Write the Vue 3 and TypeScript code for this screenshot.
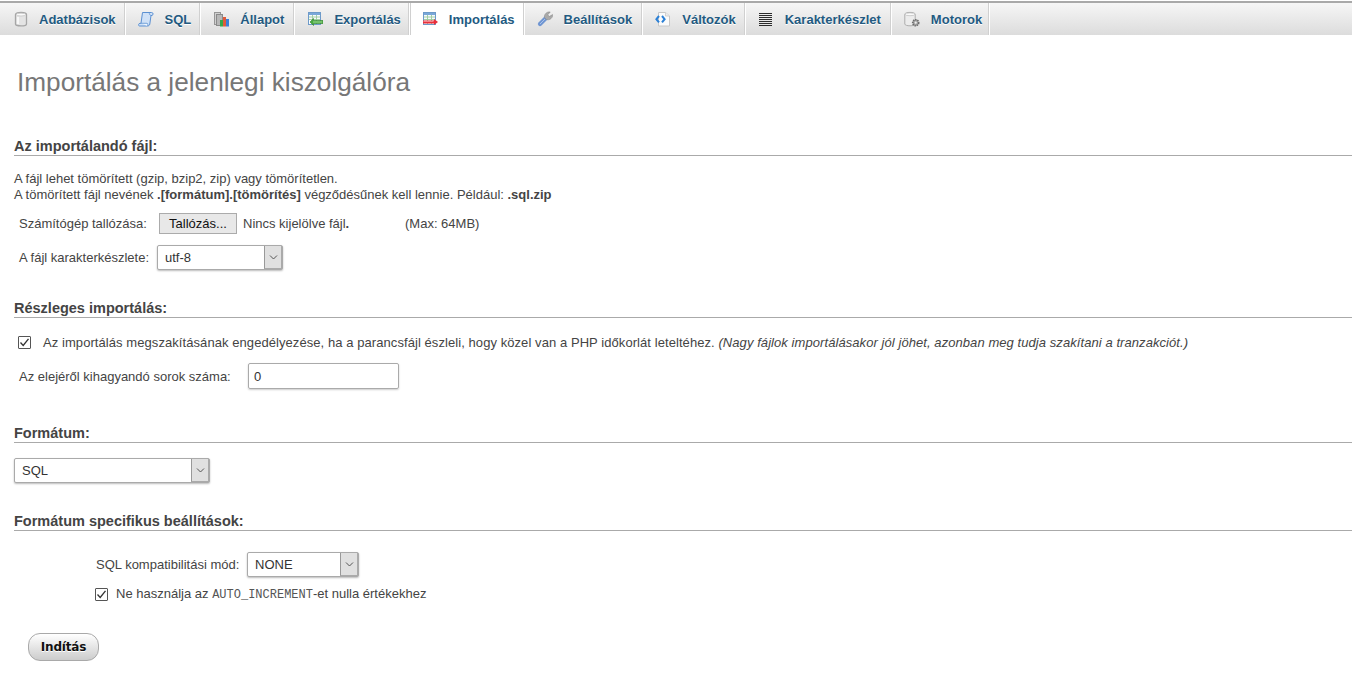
<script setup lang="ts">
const tabs = [
  { id: 'db', label: 'Adatbázisok' },
  { id: 'sql', label: 'SQL' },
  { id: 'status', label: 'Állapot' },
  { id: 'export', label: 'Exportálás' },
  { id: 'import', label: 'Importálás', active: true },
  { id: 'settings', label: 'Beállítások' },
  { id: 'vars', label: 'Változók' },
  { id: 'charset', label: 'Karakterkészlet' },
  { id: 'engines', label: 'Motorok' },
]
</script>

<template>
  <div class="page">
    <nav class="tabs">
      <a v-for="t in tabs" :key="t.id" class="tab" :class="[t.id, { active: t.active }]">
        <svg class="ico" width="16" height="16" viewBox="0 0 16 16">
          <template v-if="t.id === 'db'">
            <path d="M3.5 3.5C3.5 .8 14.5 .8 14.5 3.5V13C14.5 15.6 3.5 15.6 3.5 13Z" fill="#e4e4e4" stroke="#a6a6a6" stroke-width="1.3"/>
            <ellipse cx="9" cy="3.6" rx="4.6" ry="1.4" fill="#fafafa" stroke="#c0c0c0" stroke-width=".7"/>
            <path d="M6 6V13" stroke="#f8f8f8" stroke-width="2"/>
          </template>
          <template v-else-if="t.id === 'sql'">
            <path d="M4.5 1.5H13.5C15.5 1.5 15.5 4 14 4.5H13L11.8 13C11.6 14.5 10.5 15 9.5 15H1.5C.2 15 .2 12.5 2 12.3H3Z" fill="#cfe1f7" stroke="#5b90d2"/>
            <path d="M3 12.3H9C10 12.3 10 14 9.5 15" fill="#eef5fd" stroke="#5b90d2" stroke-width=".8"/>
            <path d="M11.5 1.5C11 3 12 4.5 13 4.5" fill="none" stroke="#5b90d2" stroke-width=".8"/>
          </template>
          <template v-else-if="t.id === 'status'">
            <rect x="1.5" y="1.5" width="6" height="12" fill="#d0d0d0" stroke="#969696"/>
            <rect x="3.5" y="3.5" width="6" height="11" fill="#b8b8b8" stroke="#8a8a8a"/>
            <rect x="7" y="9" width="3" height="6.5" fill="#35a84a"/>
            <rect x="10" y="6" width="3" height="9.5" fill="#e05a3a"/>
            <rect x="13" y="8" width="3" height="7.5" fill="#3a7fd8"/>
          </template>
          <template v-else-if="t.id === 'export'">
            <rect x="1.5" y="1.5" width="12" height="12" fill="#f6fafd" stroke="#6d9ac9"/>
            <rect x="2" y="2" width="11" height="2" fill="#79a7d8"/>
            <path d="M2 6H13M2 8.5H13M5.5 4V13M9.5 4V13" stroke="#9ccb9c" stroke-width=".9"/>
            <path d="M6.5 9.5H16V12.5H6.5V14.5L3 11L6.5 7.5Z" fill="#49ab3f" stroke="#2f7f2a" stroke-width=".6"/>
            <path d="M6 11H15.3" stroke="#b7e8ae" stroke-width=".8"/>
          </template>
          <template v-else-if="t.id === 'import'">
            <rect x="1.5" y="1.5" width="12" height="12" fill="#f6fafd" stroke="#6d9ac9"/>
            <rect x="2" y="2" width="11" height="2" fill="#79a7d8"/>
            <path d="M2 6H13M2 8.5H13M5.5 4V13M9.5 4V13" stroke="#9ccb9c" stroke-width=".9"/>
            <rect x="1" y="9.5" width="11" height="3" fill="#ea2f3b"/>
            <path d="M12 8L16 11L12 14Z" fill="#ea2f3b"/>
            <path d="M1.5 10.5H11.5" stroke="#f59aa0" stroke-width=".8"/>
          </template>
          <template v-else-if="t.id === 'settings'">
            <path d="M3 13L9 7" stroke="#6f95d2" stroke-width="4.2" stroke-linecap="round"/>
            <path d="M3 13L8 8" stroke="#a8c2ea" stroke-width="1"/>
            <path d="M7.5 6.5C7 3 10 .5 13.2 1L10.8 3.8L12.2 5.6L15.6 3.6C16 6.6 13 9.6 9.5 8.6Z" fill="#a9a9a9" stroke="#8b8b8b" stroke-width=".6"/>
          </template>
          <template v-else-if="t.id === 'vars'">
            <path d="M3.5 1.5H10.5L14.5 5V15H3.5Z" fill="#fbfbfb" stroke="#c8c8c8"/>
            <path d="M10.5 1.5V5H14.5" fill="#ededed" stroke="#c8c8c8" stroke-width=".8"/>
            <path d="M4 5L1.4 8.2L4 11.4M7 5L9.6 8.2L7 11.4" fill="none" stroke="#2b80d6" stroke-width="2"/>
          </template>
          <template v-else-if="t.id === 'charset'">
            <path d="M1 2.5H14M1 4.5H14M1 6.5H14M1 8.5H14M1 10.5H14M1 12.5H14M1 14.5H14" stroke="#2c2c2c"/>
          </template>
          <template v-else>
            <path d="M.8 3.2C.8 .8 11.2 .8 11.2 3.2V13C11.2 15.4.8 15.4.8 13Z" fill="#ececec" stroke="#adadad"/>
            <ellipse cx="6" cy="3.3" rx="4.8" ry="1.4" fill="#fafafa" stroke="#bbb" stroke-width=".7"/>
            <circle cx="11.7" cy="11.7" r="3" fill="#a2a2a2" stroke="#6c6c6c" stroke-width="1.6" stroke-dasharray="1.4 .8"/>
            <circle cx="11.7" cy="11.7" r="1.1" fill="#eee"/>
          </template>
        </svg>
        <span>{{ t.label }}</span>
      </a>
    </nav>

    <main class="content">
      <h2 class="title">Importálás a jelenlegi kiszolgálóra</h2>

      <section class="s-file">
        <h3 class="legend">Az importálandó fájl:</h3>
        <p class="note">
          A fájl lehet tömörített (gzip, bzip2, zip) vagy tömörítetlen.<br />
          A tömörített fájl nevének <b>.[formátum].[tömörítés]</b> végződésűnek kell lennie. Például: <b>.sql.zip</b>
        </p>
        <div class="row row-browse">
          <span class="lbl">Számítógép tallózása:</span>
          <button class="browse" type="button">Tallózás...</button>
          <span class="nofile">Nincs kijelölve fájl<b>.</b></span>
          <span class="max">(Max: 64MB)</span>
        </div>
        <div class="row row-charset">
          <span class="lbl">A fájl karakterkészlete:</span>
          <div class="sel w-charset"><span>utf-8</span><i class="arrow"><svg width="9" height="5" viewBox="0 0 9 5"><path d="M1 .5L4.5 4L8 .5" fill="none" stroke="#555"/></svg></i></div>
        </div>
      </section>

      <section class="s-partial">
        <h3 class="legend">Részleges importálás:</h3>
        <div class="row row-check">
          <span class="check"><svg width="13" height="13" viewBox="0 0 13 13"><path d="M2.5 6.5L5.2 9.5L10.5 2.8" fill="none" stroke="#333" stroke-width="1.3"/></svg></span>
          <span class="longline">Az importálás megszakításának engedélyezése, ha a parancsfájl észleli, hogy közel van a PHP időkorlát leteltéhez. <i>(Nagy fájlok importálásakor jól jöhet, azonban meg tudja szakítani a tranzakciót.)</i></span>
        </div>
        <div class="row row-skip">
          <span class="lbl">Az elejéről kihagyandó sorok száma:</span>
          <div class="input">0</div>
        </div>
      </section>

      <section class="s-format">
        <h3 class="legend">Formátum:</h3>
        <div class="sel w-format"><span>SQL</span><i class="arrow"><svg width="9" height="5" viewBox="0 0 9 5"><path d="M1 .5L4.5 4L8 .5" fill="none" stroke="#555"/></svg></i></div>
      </section>

      <section class="s-opts">
        <h3 class="legend">Formátum specifikus beállítások:</h3>
        <div class="row row-mode">
          <span class="lbl">SQL kompatibilitási mód:</span>
          <div class="sel w-mode"><span>NONE</span><i class="arrow"><svg width="9" height="5" viewBox="0 0 9 5"><path d="M1 .5L4.5 4L8 .5" fill="none" stroke="#555"/></svg></i></div>
        </div>
        <div class="row row-auto">
          <span class="check"><svg width="13" height="13" viewBox="0 0 13 13"><path d="M2.5 6.5L5.2 9.5L10.5 2.8" fill="none" stroke="#333" stroke-width="1.3"/></svg></span>
          <span>Ne használja az <code>AUTO_INCREMENT</code>-et nulla értékekhez</span>
        </div>
      </section>

      <button class="go" type="button">Indítás</button>
    </main>
  </div>
</template>

<style>
html, body { margin: 0; background: #fff; }
</style>

<style scoped>
.page {
  font-family: "Liberation Sans", Arial, sans-serif;
  font-size: 13px;
  color: #444;
  height: 677px;
  overflow: hidden;
}
.tabs {
  display: flex;
  height: 32px;
  border-top: 2px solid #a9a9a9;
  margin-top: 1px;
  background: linear-gradient(#f6f6f6, #dcdcdc);
}
.tab {
  display: flex;
  align-items: center;
  gap: 11px;
  padding: 0 9px 0 12px;
  border-right: 1px solid #fff;
  box-shadow: inset -1px 0 0 #d0d0d0;
  font-weight: 700;
  color: #235a81;
  text-shadow: 0 1px 0 #fff;
}
.tab.status { padding-right: 10px; }
.tab.export { padding-right: 8px; }
.tab.settings { padding-right: 10px; }
.tab.charset { padding-right: 10px; }
.tab.engines { padding-right: 7px; }
.tab.active { background: #fff; box-shadow: inset -1px 0 0 #d0d0d0, inset 1px 0 0 #d0d0d0; }
.ico { flex: none; }
.content { padding: 0 0 0 14px; }
.title {
  margin: 32px 0 0 3px;
  font-size: 26.2px;
  line-height: 30px;
  font-weight: 400;
  color: #777;
}
.legend {
  margin: 0;
  font-size: 14.5px;
  line-height: 17px;
  font-weight: 700;
  color: #444;
  border-bottom: 1px solid #aaa;
}
.s-file { margin-top: 41px; }
.note { margin: 15px 0 0; line-height: 16px; }
.row { display: flex; align-items: center; padding-left: 5px; }
.row-browse { margin-top: 9px; height: 22px; }
.row-browse .lbl { width: 140px; }
.browse {
  width: 78px;
  height: 21px;
  padding: 0;
  border: 1px solid #ababab;
  background: #e8e8e8;
  font: 13px "Liberation Sans", Arial, sans-serif;
  color: #111;
}
.nofile { margin-left: 6px; width: 162px; }
.row-charset { margin-top: 11px; }
.row-charset .lbl { width: 138px; }
.sel {
  display: flex;
  justify-content: space-between;
  align-items: stretch;
  height: 25px;
  box-sizing: border-box;
  border: 1px solid #aaa;
  border-radius: 2px;
  background: #fff;
  box-shadow: 0 1px 2px #bbb;
  color: #333;
  line-height: 24px;
}
.sel span { padding-left: 7px; }
.arrow {
  display: flex;
  align-items: center;
  justify-content: center;
  width: 16px;
  background: #e0e0e0;
  border-left: 1px solid #999;
  border-right: 1px solid #aaa;
  border-bottom: 1px solid #aaa;
}
.w-charset { width: 126px; }
.w-format { width: 196px; }
.w-mode { width: 112px; }
.s-partial { margin-top: 30px; }
.check {
  flex: none;
  width: 13px;
  height: 13px;
  border: 1px solid #555;
  box-sizing: border-box;
  display: flex;
  align-items: center;
  justify-content: center;
  border-radius: 1px;
  background: #fff;
}
.check svg { margin: -1px; flex: none; }
.row-check { margin-top: 17px; padding-left: 4px; gap: 12px; }
.longline { letter-spacing: .07px; }
.row-skip { margin-top: 13px; }
.row-skip .lbl { width: 229px; }
.input {
  width: 151px;
  height: 26px;
  box-sizing: border-box;
  border: 1px solid #aaa;
  border-radius: 2px;
  box-shadow: 0 1px 2px #ccc;
  padding-left: 5px;
  line-height: 26px;
  color: #333;
}
.s-format { margin-top: 36px; }
.s-format .sel { margin-top: 15px; }
.s-opts { margin-top: 30px; }
.row-mode { margin-top: 21px; padding-left: 82px; }
.row-mode .lbl { width: 151px; }
.row-auto { margin-top: 9px; padding-left: 81px; gap: 8px; }
code { font-family: "Liberation Mono", monospace; font-size: 12px; color: #555; }
.go {
  display: block;
  margin: 31px 0 0 14px;
  width: 71px;
  height: 28px;
  padding: 0;
  border: 1px solid #a9a9a9;
  border-radius: 12px;
  background: linear-gradient(#fff, #ccc);
  font: 700 12px "DejaVu Sans", sans-serif;
  letter-spacing: -.2px;
  color: #111;
  text-shadow: 0 1px 0 #fff;
}
</style>
